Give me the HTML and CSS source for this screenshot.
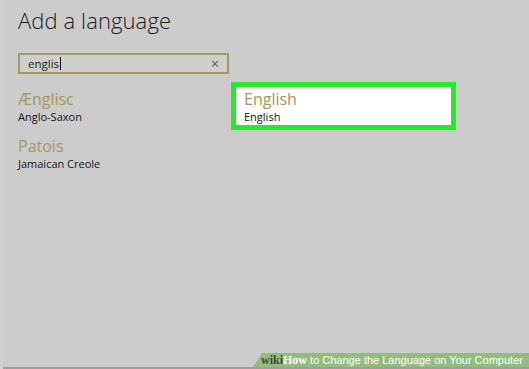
FILE: index.html
```html
<!doctype html>
<html>
<head>
    <meta charset="utf-8">
    <link rel="stylesheet" href="styles.css">
</head>
<body>
    <div class="page">
        <h1 class="title">Add a language</h1>

        <div class="search">
            <span class="query">englis<span class="caret"></span></span>
            <span class="clear">&times;</span>
        </div>

        <div class="results">
            <div class="col">
                <div class="lang">
                    <div class="native">Ænglisc</div>
                    <div class="name">Anglo-Saxon</div>
                </div>
                <div class="lang">
                    <div class="native">Patois</div>
                    <div class="name">Jamaican Creole</div>
                </div>
            </div>
            <div class="col">
                <div class="lang picked">
                    <div class="native">English</div>
                    <div class="name">English</div>
                </div>
            </div>
        </div>
    </div>

    <div class="footer">
        <div class="banner"><b class="wiki">wiki</b><b class="how">How</b> to Change the Language on Your Computer</div>
    </div>
</body>
</html>
```

FILE: styles.css
```css
*{
    margin: 0;
    padding: 0;
    box-sizing: border-box;
}
html, body{
    height: 100%;
}
body{
    background-color: #cccccc;
    font-family: "Open Sans", "Noto Sans", sans-serif;
    color: #1c1c1c;
    border-left: 3px solid #d1d1d1;
    display: flex;
    flex-direction: column;
}
.page{
    flex: 1;
    padding: 5px 0 0 15px;
}
.title{
    font-weight: 300;
    font-size: 22px;
    line-height: 30px;
    letter-spacing: 0.1px;
}
.search{
    margin-top: 18px;
    width: 211px;
    height: 21px;
    border: 2px solid #a39863;
    background-color: #cfcfcb;
    display: flex;
    align-items: center;
    justify-content: space-between;
    padding: 0 8px 0 8px;
}
.query{
    font-size: 11.5px;
    font-weight: 500;
    color: #222;
    display: flex;
    align-items: center;
}
.caret{
    display: inline-block;
    width: 1px;
    height: 13px;
    background-color: #111;
    margin-left: 1px;
}
.clear{
    font-size: 14px;
    color: #555;
    line-height: 1;
}
.results{
    margin-top: 8px;
    display: grid;
    grid-template-columns: 213px 225px;
}
.lang{
    height: 47px;
    padding-top: 7px;
}
.native{
    font-size: 16px;
    line-height: 20px;
    color: #a7975a;
}
.name{
    font-size: 11px;
    font-weight: 500;
    line-height: 16px;
    color: #141414;
}
.lang.picked{
    height: 48px;
    background-color: #ffffff;
    border: 5px solid #22ec22;
    padding: 2px 0 0 8px;
}
.footer{
    height: 16px;
    display: flex;
    justify-content: flex-end;
    border-bottom: 2px solid #9e9e9e;
}
.banner{
    width: 276px;
    background-color: #93bd7d;
    clip-path: polygon(9px 0, 100% 0, 100% 100%, 0 100%);
    color: #ffffff;
    font-family: "Liberation Sans", Arial, sans-serif;
    font-size: 11px;
    line-height: 14px;
    padding-left: 8px;
    white-space: nowrap;
}
.wiki{
    font-family: "Liberation Serif", serif;
    color: #3f4a36;
    font-size: 12px;
}
.how{
    font-family: "Liberation Serif", serif;
    font-size: 12px;
}
```
